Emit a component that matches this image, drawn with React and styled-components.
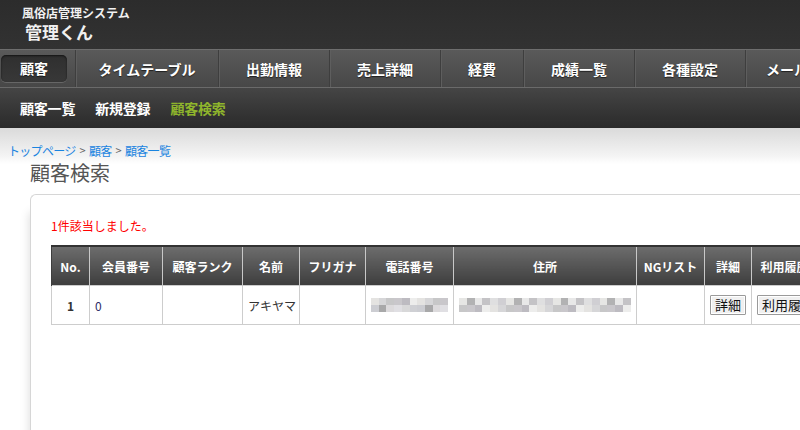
import React from 'react';
import styled, { createGlobalStyle } from 'styled-components';

const GlobalStyle = createGlobalStyle`
  html, body {
    margin: 0;
    padding: 0;
    background: #fff;
    overflow: hidden;
  }
  body {
    font-family: "Noto Sans CJK JP", "Liberation Sans", sans-serif;
    width: 800px;
    height: 430px;
  }
`;

const menu = [
  { label: '顧客', width: 76, active: true },
  { label: 'タイムテーブル', width: 143 },
  { label: '出勤情報', width: 111 },
  { label: '売上詳細', width: 111 },
  { label: '経費', width: 83 },
  { label: '成績一覧', width: 111 },
  { label: '各種設定', width: 111 },
  { label: 'メール設定', width: 111 },
];

const subMenu = [
  { label: '顧客一覧' },
  { label: '新規登録' },
  { label: '顧客検索', current: true },
];

const columns = [
  { label: 'No.', width: 38 },
  { label: '会員番号', width: 73 },
  { label: '顧客ランク', width: 80 },
  { label: '名前', width: 57 },
  { label: 'フリガナ', width: 66 },
  { label: '電話番号', width: 88 },
  { label: '住所', width: 183 },
  { label: 'NGリスト', width: 68 },
  { label: '詳細', width: 47 },
  { label: '利用履歴', width: 66 },
];

const tableWidth = columns.reduce((sum, c) => sum + c.width, 0);

// pixelated (blurred) personal data
const shades = [
  '#d3d1d6', '#dcdadc', '#cfd0d4', '#e4e3e1', '#c9c7cb', '#e8e8e8', '#d0cfd3',
  '#dedcdc', '#cccdd2', '#e0dfe3', '#bdbbc1', '#d6d6d8', '#e6e6e4', '#c4c3c6',
  '#b9b9bb', '#d8d8d9', '#a8a8a9', '#c7c7c8', '#ededec', '#dfdfe0', '#b2b2b3',
];

function mosaic(count, seed) {
  const rows = [];
  for (let r = 0; r < 2; r++) {
    const row = [];
    for (let i = 0; i < count; i++) {
      row.push(shades[(i * 7 + r * 5 + seed * 3 + ((i * i) % 4)) % shades.length]);
    }
    rows.push(row);
  }
  return rows;
}

function Mosaic({ count, seed }) {
  return (
    <MosaicBox>
      {mosaic(count, seed).map((row, r) => (
        <MosaicRow key={r}>
          {row.map((c, i) => (
            <MosaicCell key={i} style={{ background: c }} />
          ))}
        </MosaicRow>
      ))}
    </MosaicBox>
  );
}

export default function App() {
  return (
    <Page>
      <GlobalStyle />
      <Header>
        <SystemName>風俗店管理システム</SystemName>
        <AppName>管理くん</AppName>
      </Header>
      <Nav>
        {menu.map((m) => (
          <NavItem key={m.label} $width={m.width}>
            <NavLabel $active={m.active}>{m.label}</NavLabel>
          </NavItem>
        ))}
      </Nav>
      <SubNav>
        {subMenu.map((s) => (
          <SubNavItem key={s.label} $current={s.current}>
            {s.label}
          </SubNavItem>
        ))}
      </SubNav>
      <Content>
        <Breadcrumb>
          <Crumb>トップページ</Crumb>
          <Sep>&gt;</Sep>
          <Crumb>顧客</Crumb>
          <Sep>&gt;</Sep>
          <Crumb>顧客一覧</Crumb>
        </Breadcrumb>
        <Title>顧客検索</Title>
        <Panel>
          <Message>1件該当しました。</Message>
          <Table style={{ width: tableWidth }}>
            <colgroup>
              {columns.map((c) => (
                <col key={c.label} style={{ width: c.width }} />
              ))}
            </colgroup>
            <thead>
              <tr>
                {columns.map((c) => (
                  <Th key={c.label}>{c.label}</Th>
                ))}
              </tr>
            </thead>
            <tbody>
              <tr>
                <Td $align="center" $strong>1</Td>
                <Td $color="#2b2b66">0</Td>
                <Td />
                <Td $align="center">アキヤマ</Td>
                <Td />
                <Td><Mosaic count={10} seed={1} /></Td>
                <Td><Mosaic count={22} seed={4} /></Td>
                <Td />
                <Td $align="center"><SmallButton>詳細</SmallButton></Td>
                <Td><SmallButton>利用履歴</SmallButton></Td>
              </tr>
            </tbody>
          </Table>
        </Panel>
      </Content>
    </Page>
  );
}

const Page = styled.div`
  width: 800px;
  height: 430px;
  overflow: hidden;
`;

const Header = styled.header`
  height: 49px;
  background: linear-gradient(#2c2c2c, #323232);
  padding: 5px 0 0 22px;
  box-sizing: border-box;
  color: #fff;
`;

const SystemName = styled.div`
  font-size: 12px;
  font-weight: bold;
  line-height: 16px;
  color: #f2f2f2;
`;

const AppName = styled.div`
  font-size: 17px;
  font-weight: bold;
  line-height: 22px;
  margin-left: 3px;
  color: #f0f0f0;
`;

const Nav = styled.nav`
  display: flex;
  height: 37px;
  border-top: 1px solid #6e6e6e;
  border-bottom: 1px solid #6a6a6a;
  background: linear-gradient(#5a5a5a, #474747);
  overflow: hidden;
`;

const NavItem = styled.div`
  flex: 0 0 ${(p) => p.$width}px;
  display: flex;
  align-items: center;
  justify-content: center;
  border-right: 1px solid #3e3e3e;
  box-shadow: 1px 0 0 #5e5e5e;
  box-sizing: border-box;
  &:first-child {
    justify-content: flex-start;
    padding-left: 1px;
  }
`;

const NavLabel = styled.span`
  font-size: 14px;
  font-weight: bold;
  color: #fff;
  text-shadow: 0 1px 1px rgba(0, 0, 0, 0.6);
  ${(p) =>
    p.$active &&
    `
    width: 66px;
    height: 27px;
    line-height: 27px;
    text-align: center;
    border-radius: 5px;
    background: linear-gradient(#2f2f2f, #383838);
    box-shadow: inset 0 1px 2px rgba(0,0,0,.6), 0 1px 0 #666;
  `}
`;

const SubNav = styled.div`
  display: flex;
  align-items: center;
  gap: 20px;
  height: 39px;
  padding: 0 0 1px 20px;
  background: linear-gradient(#454545, #2a2a2a);
`;

const SubNavItem = styled.span`
  font-size: 14px;
  font-weight: bold;
  letter-spacing: -0.2px;
  color: ${(p) => (p.$current ? '#8fb52c' : '#fff')};
`;

const Content = styled.main`
  background: linear-gradient(#dadada 0px, #f4f4f4 28px, #fff 36px);
`;

const Breadcrumb = styled.div`
  display: flex;
  align-items: center;
  gap: 4px;
  padding: 12px 0 0 8px;
  height: 20px;
  font-size: 12px;
  letter-spacing: -0.7px;
`;

const Crumb = styled.a`
  color: #1a84e0;
`;

const Sep = styled.span`
  color: #666;
  font-size: 11px;
`;

const Title = styled.h1`
  margin: 0 0 0 30px;
  font-size: 20px;
  font-weight: normal;
  line-height: 26px;
  height: 26px;
  color: #555;
`;

const Panel = styled.section`
  margin: 8px 0 0 30px;
  height: 300px;
  border: 1px solid #d6d6d6;
  border-right: none;
  border-radius: 6px 0 0 0;
  padding: 24px 0 0 20px;
  background: #fff;
  box-shadow: -5px 14px 10px -4px rgba(0, 0, 0, 0.13);
`;

const Message = styled.p`
  margin: 0 0 12px;
  font-size: 12px;
  line-height: 14px;
  color: #f00;
`;

const Table = styled.table`
  border-collapse: collapse;
  table-layout: fixed;
  font-size: 12px;
`;

const Th = styled.th`
  height: 38px;
  padding: 0;
  color: #fff;
  font-weight: bold;
  font-size: 12px;
  background: linear-gradient(#6c6c6c, #3e3e3e);
  border-top: 2px solid #333;
  border-left: 1px solid #c8c8c8;
  border-right: 1px solid #c8c8c8;
  white-space: nowrap;
  overflow: hidden;
  &:first-child {
    border-left-color: #3e3e3e;
  }
`;

const Td = styled.td`
  height: 38px;
  padding: 0 5px;
  border: 1px solid #cdcdcd;
  text-align: ${(p) => p.$align || 'left'};
  font-weight: ${(p) => (p.$strong ? 'bold' : 'normal')};
  color: ${(p) => p.$color || '#333'};
  font-size: 12px;
  white-space: nowrap;
  overflow: hidden;
`;

const SmallButton = styled.button`
  font-family: inherit;
  font-size: 13px;
  line-height: 16px;
  padding: 1px 4px;
  color: #111;
  background: #f0f0f0;
  border: 1px solid #9a9a9a;
  border-radius: 1px;
  box-shadow: inset 0 0 0 1px #fff;
`;

const MosaicBox = styled.div`
  display: flex;
  flex-direction: column;
`;

const MosaicRow = styled.div`
  display: flex;
`;

const MosaicCell = styled.span`
  width: 8px;
  height: 7px;
`;
